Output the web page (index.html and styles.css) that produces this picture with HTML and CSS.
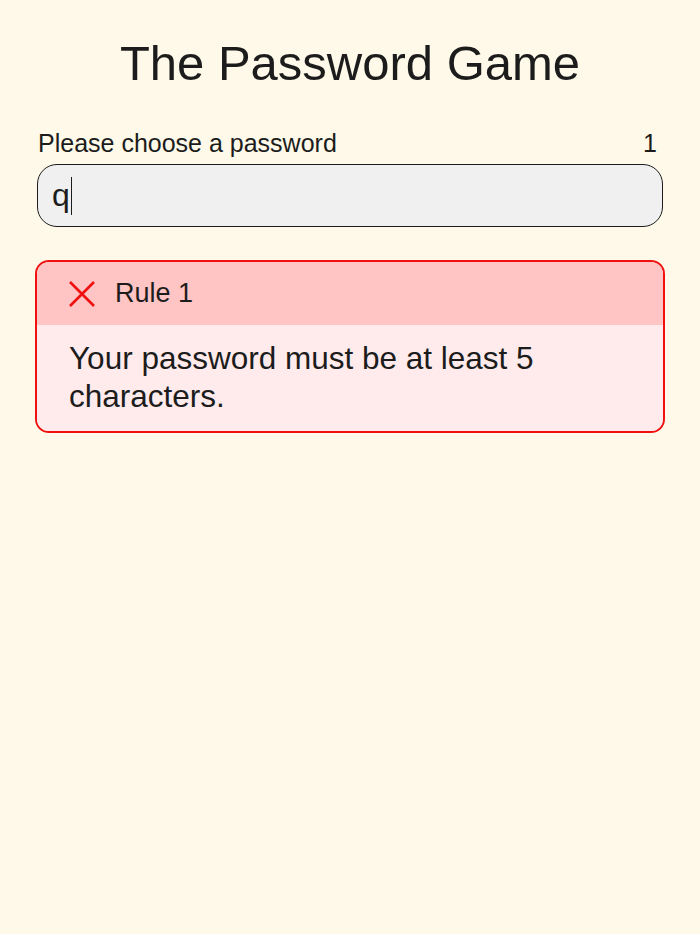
FILE: index.html
```html
<!DOCTYPE html>
<html lang="en">
<head>
  <meta charset="UTF-8" />
  <title>The Password Game</title>
  <link rel="stylesheet" href="styles.css">
</head>
<body>
  <div class="container">
    <h1 class="title">The Password Game</h1>

    <div class="password-label">
      <span>Please choose a password</span>
      <span class="length">1</span>
    </div>
    <div class="password-box">
      <span class="password-text">q</span><span class="caret"></span>
    </div>

    <!-- rules -->
    <div class="rule rule-error">
      <div class="rule-top">
        <svg class="rule-icon" width="28" height="26" viewBox="0 0 28 26">
          <path d="M2 1 L26 25 M26 1 L2 25" stroke="#f01010" stroke-width="2.6" fill="none" />
        </svg>
        <span>Rule 1</span>
      </div>
      <div class="rule-desc">Your password must be at least 5 characters.</div>
    </div>
  </div>
</body>
</html>
```

FILE: styles.css
```css
body {
  margin: 0;
  background: #fef9e8;
  font-family: "Liberation Sans", Arial, sans-serif;
  color: #1c1c1c;
}
.container {
  width: 626px;
  margin: 0 auto;
}
.title {
  margin: 0;
  padding-top: 35px;
  font-size: 49px;
  font-weight: normal;
  line-height: 56px;
  text-align: center;
}

/* password input */
.password-label {
  display: flex;
  justify-content: space-between;
  margin-top: 38px;
  padding: 0 6px 0 1px;
  font-size: 25px;
  line-height: 28px;
}
.password-box {
  display: flex;
  align-items: center;
  height: 61px;
  margin-top: 7px;
  padding: 0 14px;
  border: 1.5px solid #1c1c1c;
  border-radius: 20px;
  background: #f0f0f0;
  font-size: 32px;
}
.caret {
  width: 1px;
  height: 38px;
  margin-left: 1px;
  background: #1c1c1c;
}

/* rule cards */
.rule {
  margin: 33px -2px 0;
  border: 2.5px solid #f01010;
  border-radius: 14px;
  overflow: hidden;
}
.rule-top {
  display: flex;
  align-items: center;
  gap: 19px;
  height: 63px;
  padding-left: 31px;
  background: #ffc4c4;
  font-size: 27px;
}
.rule-desc {
  padding: 14px 30px 16px 32px;
  background: #ffebeb;
  font-size: 31.5px;
  line-height: 38px;
}
```
